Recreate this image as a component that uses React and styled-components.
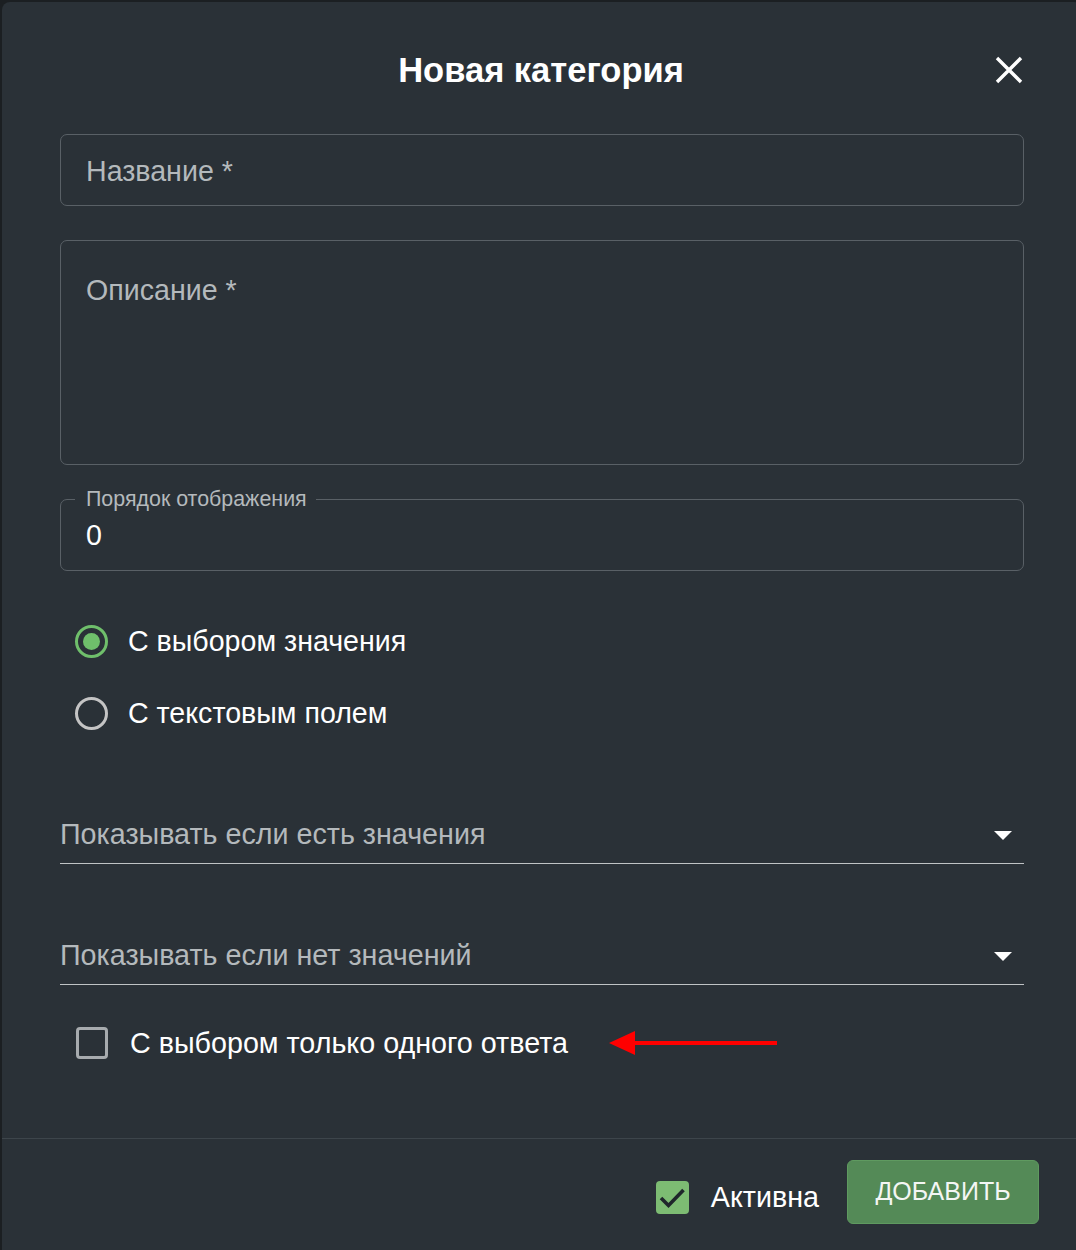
import React from 'react';
import styled, { createGlobalStyle } from 'styled-components';

const GlobalStyle = createGlobalStyle`
  html, body {
    margin: 0;
    padding: 0;
    background: #1b1f22;
    overflow: hidden;
  }
  body {
    font-family: "Liberation Sans", Arial, sans-serif;
  }
`;

const Page = styled.div`
  width: 1076px;
  height: 1250px;
  overflow: hidden;
  padding: 2px 0 0 2px;
  box-sizing: border-box;
`;

const Dialog = styled.div`
  width: 1080px;
  height: 1260px;
  background: #2a3137;
  border-radius: 8px;
  display: flex;
  flex-direction: column;
  box-sizing: border-box;
`;

const Header = styled.div`
  position: relative;
  flex-shrink: 0;
  height: 44px;
  margin-top: 46px;
  display: flex;
  align-items: center;
  justify-content: center;
  padding-right: 2px;
`;

const Title = styled.h2`
  margin: 0;
  font-size: 34.5px;
  font-weight: 700;
  color: #ffffff;
`;

const CloseButton = styled.button`
  position: absolute;
  right: 58px;
  top: 50%;
  transform: translateY(-50%);
  background: none;
  border: none;
  padding: 0;
  width: 30px;
  height: 30px;
  display: flex;
  align-items: center;
  justify-content: center;
  cursor: pointer;
`;

const Body = styled.div`
  flex-shrink: 0;
  padding: 42px 58px 0 58px;
  display: flex;
  flex-direction: column;
  height: 1047px;
  box-sizing: border-box;
  border-bottom: 1px solid #3d454b;
`;

const Outlined = styled.div`
  position: relative;
  height: ${p => p.h}px;
  border: 1px solid #596066;
  border-radius: 7px;
  box-sizing: border-box;
  margin-bottom: 34px;
  padding: ${p => p.top}px 25px 0;
`;

const Placeholder = styled.div`
  font-size: 28.6px;
  color: #b4b9bc;
  line-height: 1;
`;

const Legend = styled.span`
  position: absolute;
  left: 14px;
  top: -12px;
  padding: 0 9px 0 11px;
  background: #2a3137;
  font-size: 21.4px;
  color: #b4b9bc;
  line-height: 22px;
`;

const Value = styled.div`
  font-size: 28.6px;
  color: #ffffff;
  line-height: 1;
`;

const RadioGroup = styled.div`
  display: flex;
  flex-direction: column;
  padding-left: 15px;
  margin-bottom: 59px;
`;

const OptionRow = styled.label`
  display: flex;
  align-items: center;
  height: 72px;
  gap: 20px;
  font-size: 28.6px;
  color: #ffffff;
`;

const RadioCircle = styled.span`
  width: 33px;
  height: 33px;
  border-radius: 50%;
  box-sizing: border-box;
  border: 3px solid ${p => (p.checked ? '#6fbf6b' : '#c4c4c4')};
  display: flex;
  align-items: center;
  justify-content: center;
  &::after {
    content: '';
    display: ${p => (p.checked ? 'block' : 'none')};
    width: 17px;
    height: 17px;
    border-radius: 50%;
    background: #6fbf6b;
  }
`;

const Select = styled.div`
  height: 56px;
  border-bottom: 1.5px solid #bfc3c5;
  box-sizing: border-box;
  display: flex;
  align-items: center;
  justify-content: space-between;
  padding-right: 12px;
  margin-bottom: ${p => p.mb}px;
`;

const SelectText = styled.span`
  font-size: 28.7px;
  color: #b4b9bc;
  margin-top: -2px;
`;

const Caret = styled.span`
  width: 0;
  height: 0;
  border-left: 9px solid transparent;
  border-right: 9px solid transparent;
  border-top: 9px solid #ffffff;
`;

const CheckRow = styled.div`
  display: flex;
  align-items: center;
  height: 48px;
  padding-left: 16px;
`;

const Box = styled.span`
  width: ${p => (p.checked ? 33 : 32)}px;
  height: ${p => (p.checked ? 33 : 32)}px;
  box-sizing: border-box;
  border-radius: 4px;
  flex-shrink: 0;
  display: flex;
  align-items: center;
  justify-content: center;
  border: ${p => (p.checked ? 'none' : '3px solid #a7abae')};
  background: ${p => (p.checked ? '#7dbc73' : 'transparent')};
`;

const CheckLabel = styled.span`
  font-size: 28.7px;
  color: #ffffff;
  margin-left: ${p => p.ml}px;
`;

const Arrow = styled.svg`
  margin-left: 41px;
  display: block;
`;

const Footer = styled.div`
  display: flex;
  justify-content: flex-end;
  align-items: flex-start;
  padding: 21px 43px 0 0;
`;

const ActiveToggle = styled.div`
  display: flex;
  align-items: center;
  margin-top: 21px;
  margin-right: 28px;
`;

const AddButton = styled.button`
  width: 192px;
  height: 64px;
  border-radius: 6px;
  border: 1px solid #5f9a60;
  background: #548a57;
  color: #f4f6f4;
  font-family: "Liberation Sans", Arial, sans-serif;
  font-size: 25px;
  padding: 0 0 2px;
  cursor: pointer;
`;

export default function App() {
  return (
    <Page>
      <GlobalStyle />
      <Dialog>
        <Header>
          <Title>Новая категория</Title>
          <CloseButton aria-label="close">
            <svg width="28" height="28" viewBox="0 0 28 28">
              <path d="M2 2 L26 26 M26 2 L2 26" stroke="#ffffff" strokeWidth="3.4" strokeLinecap="butt" />
            </svg>
          </CloseButton>
        </Header>
        <Body>
          <Outlined h={72} top={22}>
            <Placeholder>Название *</Placeholder>
          </Outlined>
          <Outlined h={225} top={35}>
            <Placeholder>Описание *</Placeholder>
          </Outlined>
          <Outlined h={72} top={21}>
            <Legend>Порядок отображения</Legend>
            <Value>0</Value>
          </Outlined>
          <RadioGroup>
            <OptionRow>
              <RadioCircle checked />
              С выбором значения
            </OptionRow>
            <OptionRow>
              <RadioCircle />
              С текстовым полем
            </OptionRow>
          </RadioGroup>
          <Select mb={65}>
            <SelectText>Показывать если есть значения</SelectText>
            <Caret />
          </Select>
          <Select mb={34}>
            <SelectText>Показывать если нет значений</SelectText>
            <Caret />
          </Select>
          <CheckRow>
            <Box />
            <CheckLabel ml={22}>С выбором только одного ответа</CheckLabel>
            <Arrow width="168" height="28" viewBox="0 0 168 28">
              <polygon points="0,14 26,2 26,26" fill="#ff0000" />
              <rect x="20" y="12" width="148" height="4" fill="#ff0000" />
            </Arrow>
          </CheckRow>
        </Body>
        <Footer>
          <ActiveToggle>
            <Box checked>
              <svg width="33" height="33" viewBox="0 0 33 33">
                <path d="M5 17 L12.5 24.5 L27.5 9" fill="none" stroke="#1f262b" strokeWidth="3.6" />
              </svg>
            </Box>
            <CheckLabel ml={22}>Активна</CheckLabel>
          </ActiveToggle>
          <AddButton>ДОБАВИТЬ</AddButton>
        </Footer>
      </Dialog>
    </Page>
  );
}
